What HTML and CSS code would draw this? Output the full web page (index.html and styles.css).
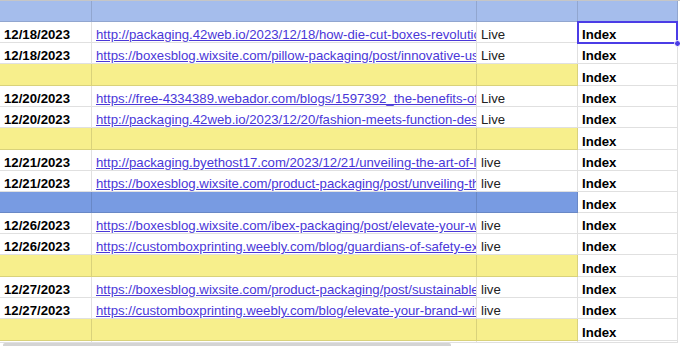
FILE: index.html
```html
<!DOCTYPE html>
<html lang="en">
<head>
    <meta charset="UTF-8">
    <meta name="viewport" content="width=device-width, initial-scale=1.0">
    <title>Backlinks - December</title>
    <link rel="stylesheet" href="styles.css">
</head>
<body>
    <div class="sheet">
        <div class="row head"><div class="cell"></div><div class="cell"></div><div class="cell"></div><div class="cell"></div></div>

        <div class="row"><div class="cell date">12/18/2023</div><div class="cell url"><a class="link">http://packaging.42web.io/2023/12/18/how-die-cut-boxes-revolutionize-packaging/</a></div><div class="cell status">Live</div><div class="cell tag">Index</div></div>
        <div class="row"><div class="cell date">12/18/2023</div><div class="cell url"><a class="link">https://boxesblog.wixsite.com/pillow-packaging/post/innovative-uses-of-pillow-boxes</a></div><div class="cell status">Live</div><div class="cell tag">Index</div></div>
        <div class="row sep yellow"><div class="cell"></div><div class="cell"></div><div class="cell"></div><div class="cell tag">Index</div></div>

        <div class="row"><div class="cell date">12/20/2023</div><div class="cell url"><a class="link">https://free-4334389.webador.com/blogs/1597392_the-benefits-of-custom-boxes</a></div><div class="cell status">Live</div><div class="cell tag">Index</div></div>
        <div class="row"><div class="cell date">12/20/2023</div><div class="cell url"><a class="link">http://packaging.42web.io/2023/12/20/fashion-meets-function-designing-boxes/</a></div><div class="cell status">Live</div><div class="cell tag">Index</div></div>
        <div class="row sep yellow"><div class="cell"></div><div class="cell"></div><div class="cell"></div><div class="cell tag">Index</div></div>

        <div class="row"><div class="cell date">12/21/2023</div><div class="cell url"><a class="link">http://packaging.byethost17.com/2023/12/21/unveiling-the-art-of-luxury-packaging/</a></div><div class="cell status">live</div><div class="cell tag">Index</div></div>
        <div class="row"><div class="cell date">12/21/2023</div><div class="cell url"><a class="link">https://boxesblog.wixsite.com/product-packaging/post/unveiling-the-secrets</a></div><div class="cell status">live</div><div class="cell tag">Index</div></div>
        <div class="row blue"><div class="cell"></div><div class="cell"></div><div class="cell"></div><div class="cell tag">Index</div></div>

        <div class="row"><div class="cell date">12/26/2023</div><div class="cell url"><a class="link">https://boxesblog.wixsite.com/ibex-packaging/post/elevate-your-wine-packaging</a></div><div class="cell status">live</div><div class="cell tag">Index</div></div>
        <div class="row"><div class="cell date">12/26/2023</div><div class="cell url"><a class="link">https://customboxprinting.weebly.com/blog/guardians-of-safety-exploring-boxes</a></div><div class="cell status">live</div><div class="cell tag">Index</div></div>
        <div class="row sep yellow"><div class="cell"></div><div class="cell"></div><div class="cell"></div><div class="cell tag">Index</div></div>

        <div class="row"><div class="cell date">12/27/2023</div><div class="cell url"><a class="link">https://boxesblog.wixsite.com/product-packaging/post/sustainable-packaging</a></div><div class="cell status">live</div><div class="cell tag">Index</div></div>
        <div class="row"><div class="cell date">12/27/2023</div><div class="cell url"><a class="link">https://customboxprinting.weebly.com/blog/elevate-your-brand-with-custom-boxes</a></div><div class="cell status">live</div><div class="cell tag">Index</div></div>
        <div class="row sep yellow"><div class="cell"></div><div class="cell"></div><div class="cell"></div><div class="cell tag">Index</div></div>

        <div class="row rest"><div class="cell"></div><div class="cell"></div><div class="cell"></div><div class="cell"></div></div>

        <!-- celda activa -->
        <div class="selection"><span class="handle"></span></div>
    </div>

    <div class="scrollbar"><div class="thumb"></div></div>
</body>
</html>
```

FILE: styles.css
```css
* {
    margin: 0;
    padding: 0;
    box-sizing: border-box;
}

body {
    width: 680px;
    height: 346px;
    overflow: hidden;
    background: #fff;
    font-family: "Liberation Sans", Arial, Helvetica, sans-serif;
    font-size: 13.2px;
    color: #000;
}

.sheet {
    position: relative;
    width: 680px;
}

.row {
    display: grid;
    grid-template-columns: 92px 385px 101px 100px;
    height: 21px;
}

.row.sep {
    height: 22px;
}

.cell {
    display: flex;
    align-items: flex-end;
    min-width: 0;
    padding: 0 3px;
    line-height: 15px;
    white-space: nowrap;
    overflow: hidden;
    border-right: 1px solid rgba(0, 0, 0, 0.12);
    border-bottom: 1px solid rgba(0, 0, 0, 0.12);
}

.head {
    height: 22px;
    border-top: 1px solid #c6c6c6;
}

.head .cell {
    background: #a5bdec;
}

.yellow .cell {
    background: #f7ef8c;
}

.blue .cell {
    background: #789be2;
}

.yellow .cell.tag,
.blue .cell.tag {
    background: #fff;
}

.rest {
    height: 2px;
}

.date {
    font-weight: bold;
    padding-left: 4px;
}

.url {
    padding-right: 0;
}

.link {
    display: block;
    min-width: 0;
    overflow: hidden;
    color: #4a37d8;
    text-decoration: underline;
    padding-left: 1px;
}

.status {
    color: #222;
    padding-left: 4px;
}

.tag {
    font-weight: bold;
    padding-left: 4px;
}

.selection {
    position: absolute;
    left: 577px;
    top: 21px;
    width: 101px;
    height: 23px;
    border: 2px solid #4b3ce6;
}

.handle {
    position: absolute;
    right: -5px;
    bottom: -5px;
    width: 7px;
    height: 7px;
    border-radius: 50%;
    background: #4b3ce6;
    border: 1px solid #fff;
}

.scrollbar {
    height: 3px;
    padding-left: 3px;
}

.thumb {
    width: 448px;
    height: 3px;
    border-radius: 2px 2px 0 0;
    background: #d4d4d4;
}
```
